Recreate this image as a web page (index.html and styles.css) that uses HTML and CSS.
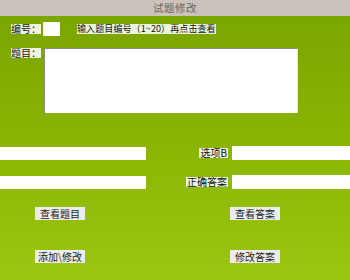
FILE: index.html
```html
<!doctype html>
<html>
	<head>
		<meta charset="utf-8"/>
		<title>试题修改</title>
		<link rel="stylesheet" href="styles.css">
	</head>
	<body>
		<div class="title">试题修改</div>
		<div class="main">
			<div class="row-id">
				<span class="lbl">编号：</span>
				<span class="box id-box"></span>
				<span class="lbl hint">输入题目编号（1~20）再点击查看</span>
			</div>
			<div class="row-q">
				<span class="lbl">题目：</span>
				<span class="box question"></span>
			</div>
			<div class="row-field first">
				<span class="box field-left"></span>
				<span class="lbl field-lbl">选项B</span>
				<span class="box field-right"></span>
			</div>
			<div class="row-field">
				<span class="box field-left"></span>
				<span class="lbl field-lbl">正确答案</span>
				<span class="box field-right"></span>
			</div>
			<div class="row-btn first-btn">
				<span class="btn">查看题目</span>
				<span class="btn">查看答案</span>
			</div>
			<div class="row-btn">
				<span class="btn">添加\修改</span>
				<span class="btn">修改答案</span>
			</div>
		</div>
	</body>
</html>
```
FILE: styles.css
```css
*{margin:0;padding:0;box-sizing:border-box;}
body{
	width:350px;
	height:280px;
	overflow:hidden;
	font-family:"Noto Sans CJK SC","Liberation Sans",sans-serif;
	font-size:10px;
	color:#111;
}
.title{
	height:16px;
	line-height:16px;
	text-align:center;
	background:#cbc3bb;
	color:#6a6660;
	font-size:10.5px;
	letter-spacing:0.5px;
}
.main{
	height:264px;
	background:linear-gradient(#7ba500,#8cb705 55%,#9cc612);
	padding-top:6px;
}
.lbl{
	display:inline-block;
	background:#eef3dc;
	line-height:10px;
	height:10px;
	white-space:nowrap;
}
.box{
	display:block;
	background:#fff;
}
.row-id{
	display:flex;
	align-items:center;
	padding-left:11px;
	height:14px;
}
.id-box{
	width:17px;
	height:14px;
	margin-left:2px;
}
.hint{
	margin-left:17px;
	font-size:9px;
	letter-spacing:0.1px;
}
.row-q{
	display:flex;
	align-items:flex-start;
	padding-left:11px;
	margin-top:12px;
}
.question{
	width:254px;
	height:65px;
	margin-left:3px;
	border-top:1px solid #8a8a80;
	border-left:1px solid #8a8a80;
	border-right:1px solid #e6ecd0;
}
.row-field{
	display:flex;
	align-items:center;
	height:14px;
	margin-top:15px;
}
.row-field.first{
	margin-top:33px;
}
.field-left{
	width:146px;
	height:13px;
}
.field-lbl{
	margin-left:auto;
	margin-right:4px;
	padding:0 1px;
}
.field-right{
	width:118px;
	height:14px;
}
.row-btn{
	display:flex;
	padding-left:35px;
	gap:145px;
	margin-top:30px;
}
.row-btn.first-btn{
	margin-top:18px;
}
.btn{
	display:block;
	width:50px;
	height:13px;
	line-height:13px;
	text-align:center;
	background:#ececec;
	color:#222;
}
```
